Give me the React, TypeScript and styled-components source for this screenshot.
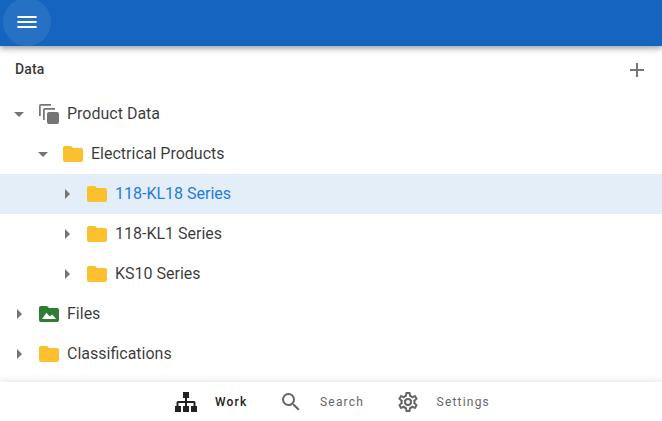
import React from "react";
import styled, { createGlobalStyle } from "styled-components";

const GlobalStyle = createGlobalStyle`
  * { box-sizing: border-box; }
  body { margin: 0; background: #fff; font-family: Roboto, "Liberation Sans", sans-serif; overflow: hidden; }
`;

const Page = styled.div`
  display: flex;
  flex-direction: column;
  width: 100%;
  height: 100vh;
  background: #fff;
`;

const AppBar = styled.header`
  flex: none;
  height: 46px;
  background: #1565c0;
  box-shadow: 0 2px 4px -1px rgba(0, 0, 0, 0.2), 0 4px 5px rgba(0, 0, 0, 0.14), 0 1px 10px rgba(0, 0, 0, 0.12);
  z-index: 1;
`;

const MenuButton = styled.button`
  display: flex;
  align-items: center;
  justify-content: center;
  width: 48px;
  height: 48px;
  margin: -2px 0 0 3px;
  padding: 0;
  border: 0;
  border-radius: 50%;
  color: #fff;
  background: rgba(255, 255, 255, 0.08);
`;

const SectionHeader = styled.div`
  flex: none;
  display: flex;
  align-items: center;
  justify-content: space-between;
  height: 48px;
  padding: 0 13px 0 15px;
`;

const SectionTitle = styled.h1`
  margin: 0 0 3px;
  font-size: 14px;
  line-height: 20px;
  font-weight: 500;
  letter-spacing: 0.1px;
  color: rgba(0, 0, 0, 0.8);
`;

const AddButton = styled.button`
  display: flex;
  padding: 0;
  border: 0;
  background: none;
  color: #757575;
`;

const Tree = styled.main`
  flex: 1;
  min-height: 0;
`;

const TreeRow = styled.div<{ $depth: number; $selected?: boolean }>`
  display: flex;
  align-items: center;
  height: 40px;
  padding-left: ${(p) => 7 + p.$depth * 24}px;
  gap: 6px;
  background: ${(p) => (p.$selected ? "#e3eef9" : "transparent")};
  color: ${(p) => (p.$selected ? "#1e7ce0" : "rgba(0, 0, 0, 0.78)")};
`;

const Label = styled.span`
  font-size: 16px;
  line-height: 24px;
  white-space: nowrap;
`;

const Icon = styled.svg`
  display: block;
  flex: none;
  width: 24px;
  height: 24px;
  fill: currentColor;
`;

const TintedIcon = styled(Icon)<{ $color: string }>`
  color: ${(p) => p.$color};
`;

const BottomNav = styled.nav`
  flex: none;
  display: flex;
  justify-content: center;
  height: 39px;
  gap: 31.5px;
  padding: 1px 0 0 2px;
  background: #fff;
  box-shadow: 0 -1px 8px rgba(0, 0, 0, 0.12);
`;

const NavItem = styled.a<{ $active?: boolean }>`
  display: flex;
  align-items: center;
  gap: 17px;
  font-size: 12px;
  font-weight: ${(p) => (p.$active ? 500 : 400)};
  letter-spacing: 1.2px;
  color: ${(p) => (p.$active ? "#212121" : "#666")};
`;

const FOLDER =
  "M10 4H4C2.89 4 2 4.89 2 6V18A2 2 0 0 0 4 20H20A2 2 0 0 0 22 18V8C22 6.89 21.1 6 20 6H12Z";

const icons = {
  folder: (
    <TintedIcon $color="#fbc02d" viewBox="0 0 24 24"><path d={FOLDER} /></TintedIcon>
  ),
  files: (
    <TintedIcon $color="#2e7d32" viewBox="0 0 24 24">
      <path d={FOLDER} />
      <path d="M5 17L9.500 10.700L12.700 14.500L15.300 12.500L19 17Z" fill="#fff" />
    </TintedIcon>
  ),
  stack: (
    <TintedIcon $color="#757575" viewBox="0 0 24 24">
      <path d="M2 14V4Q2 2 4 2H14V3.750H3.750V14ZM6 18V8Q6 6 8 6H18V7.750H7.750V18Z" />
      <rect x="10" y="10" width="12" height="12" rx="2" />
    </TintedIcon>
  ),
};

type Row = { label: string; depth: number; icon: keyof typeof icons; open?: boolean; selected?: boolean };

const rows: Row[] = [
  { label: "Product Data", depth: 0, icon: "stack", open: true },
  { label: "Electrical Products", depth: 1, icon: "folder", open: true },
  { label: "118-KL18 Series", depth: 2, icon: "folder", selected: true },
  { label: "118-KL1 Series", depth: 2, icon: "folder" },
  { label: "KS10 Series", depth: 2, icon: "folder" },
  { label: "Files", depth: 0, icon: "files" },
  { label: "Classifications", depth: 0, icon: "folder" },
];

export default function App() {
  return (
    <Page>
      <GlobalStyle />
      <AppBar>
        <MenuButton aria-label="Menu">
          <Icon viewBox="0 0 24 24"><path d="M2.4 6H21.6V8H2.4ZM2.4 11H21.6V13H2.4ZM2.4 16H21.6V18H2.4Z" /></Icon>
        </MenuButton>
      </AppBar>
      <SectionHeader>
        <SectionTitle>Data</SectionTitle>
        <AddButton aria-label="Add">
          <Icon viewBox="0 0 24 24"><path d="M19 13H13V19H11V13H5V11H11V5H13V11H19Z" /></Icon>
        </AddButton>
      </SectionHeader>
      <Tree>
        {rows.map((row) => (
          <TreeRow key={row.label} $depth={row.depth} $selected={row.selected}>
            <TintedIcon $color="#757575" viewBox="0 0 24 24">
              <path d={row.open ? "M7 10L12 15L17 10Z" : "M10 17L15 12L10 7Z"} />
            </TintedIcon>
            {icons[row.icon]}
            <Label>{row.label}</Label>
          </TreeRow>
        ))}
      </Tree>
      <BottomNav>
        <NavItem $active>
          <Icon viewBox="0 0 24 24">
            <path d="M9 2H15V8H13V11H20Q21.5 11 21.5 12.5V16H23V22H17V16H19.5V13H13V16H15V22H9V16H11V13H4.500V16H7V22H1V16H2.500V12.500Q2.500 11 4 11H11V8H9Z" />
          </Icon>
          Work
        </NavItem>
        <NavItem>
          <Icon viewBox="0 0 24 24">
            <path d="M15.500 14h-.79l-.28-.27A6.471 6.471 0 0 0 16 9.500 6.500 6.500 0 1 0 9.500 16c1.610 0 3.090-.59 4.230-1.570l.27.28v.79l5 4.990L20.490 19zm-6 0C7.010 14 5 11.990 5 9.500S7.010 5 9.500 5 14 7.010 14 9.500 11.990 14 9.500 14" />
          </Icon>
          Search
        </NavItem>
        <NavItem>
          <Icon viewBox="0 0 24 24">
            <path d="M12 8a4 4 0 0 1 4 4 4 4 0 0 1-4 4 4 4 0 0 1-4-4 4 4 0 0 1 4-4m0 2a2 2 0 0 0-2 2 2 2 0 0 0 2 2 2 2 0 0 0 2-2 2 2 0 0 0-2-2m-2 12c-.25 0-.46-.18-.5-.42l-.37-2.650c-.63-.25-1.170-.59-1.690-.99l-2.490 1.010c-.22.08-.49 0-.61-.22l-2-3.460c-.13-.22-.07-.49.12-.64l2.110-1.660L4.500 12l.07-1-2.110-1.630c-.19-.15-.25-.42-.12-.64l2-3.460c.12-.22.39-.31.61-.22l2.490 1c.52-.39 1.060-.73 1.690-.98l.37-2.650c.04-.24.25-.42.5-.42h4c.25 0 .46.18.5.42l.37 2.650c.63.25 1.170.59 1.690.98l2.490-1c.22-.09.49 0 .61.22l2 3.460c.13.22.07.49-.12.64L19.430 11l.07 1-.07 1 2.110 1.630c.19.15.25.42.12.64l-2 3.460c-.12.22-.39.31-.61.22l-2.490-1c-.52.39-1.060.73-1.690.98l-.37 2.650c-.04.24-.25.42-.5.42h-4m1.250-18-.37 2.610c-1.200.25-2.260.89-3.030 1.780L5.440 7.350l-.75 1.300L6.800 10.200a6.550 6.550 0 0 0 0 3.600l-2.120 1.560.75 1.300 2.430-1.040c.77.88 1.820 1.520 3.010 1.760l.37 2.620h1.520l.37-2.610c1.190-.25 2.240-.89 3.010-1.770l2.430 1.040.75-1.300-2.120-1.550c.4-1.170.4-2.440 0-3.610l2.110-1.550-.75-1.300-2.410 1.040a5.420 5.420 0 0 0-3.030-1.770L12.750 4h-1.500Z" />
          </Icon>
          Settings
        </NavItem>
      </BottomNav>
    </Page>
  );
}
